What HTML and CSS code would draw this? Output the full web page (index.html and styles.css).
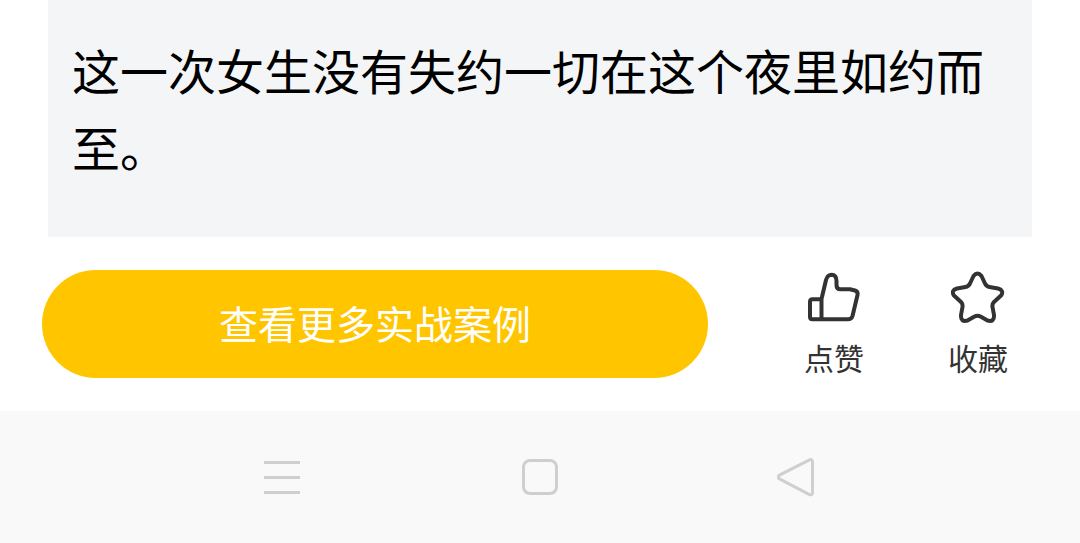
FILE: index.html
```html
<!DOCTYPE html>
<html lang="zh-CN">
<head>
  <meta charset="UTF-8" />
  <meta name="viewport" content="width=device-width, initial-scale=1.0" />
  <title>实战案例</title>
  <link rel="stylesheet" href="styles.css">
</head>
<body>
  <main class="article">
    <p>这一次女生没有失约一切在这个夜里如约而至。</p>
  </main>

  <div class="toolbar">
    <button class="more" type="button">查看更多实战案例</button>
    <div class="actions">
      <button class="action" type="button">
        <svg viewBox="0 0 54 54" aria-hidden="true">
          <path d="M14.5 29 L19 10 Q20.5 4.8 24.5 4.8 Q29.5 5 29.5 11 V15 Q29.5 19.3 33.5 19.3 H43 L48 20.5 Q51.2 21.5 50.5 25 L45.5 46 Q44.5 49.3 41 49.3 H5.5 Q3 49.3 3 46.8 V31.8 Q3 29.3 5.5 29.3 H14.5 V49.3" />
        </svg>
        <span>点赞</span>
      </button>
      <button class="action" type="button">
        <svg viewBox="0 0 54 54" aria-hidden="true">
          <path d="M22.5 6 Q26.5 0.8 30.5 6 L34 13.5 Q35.5 16.5 38.5 17 L47 18.5 Q53.5 20.5 50 25.5 L43 32 Q41 34 41.5 37 L43 45 Q43.5 52.5 36.5 50.5 L29.5 46.5 Q26.5 45 23.5 46.5 L16.5 50.5 Q9.5 52.5 10 45 L11.5 37 Q12 34 10 32 L3 25.5 Q-0.5 20.5 6 18.5 L14.5 17 Q17.5 16.5 19 13.5 Z" />
        </svg>
        <span>收藏</span>
      </button>
    </div>
  </div>

  <nav class="system-nav">
    <button type="button" aria-label="菜单">
      <svg viewBox="0 0 42 42"><path d="M3 6.5 H39 M3 21.5 H39 M3 36.5 H39" /></svg>
    </button>
    <button type="button" aria-label="主页">
      <svg viewBox="0 0 42 42"><rect x="4.5" y="4.5" width="33" height="33" rx="6.5" /></svg>
    </button>
    <button type="button" aria-label="返回">
      <svg viewBox="0 0 42 42"><path d="M32.5 3.8 L3 18.8 Q-0.5 21 3 23.2 L32.5 38.6 Q35.5 39.5 35.5 36.5 V6 Q35.5 2.8 32.5 3.8 Z" /></svg>
    </button>
  </nav>
</body>
</html>
```

FILE: styles.css
```css
* {
  margin: 0;
  padding: 0;
  box-sizing: border-box;
}

body {
  background: #fff;
  color: #000;
  font-family: "Noto Sans CJK SC", sans-serif;
}

button {
  border: none;
  background: none;
  font-family: inherit;
  cursor: pointer;
}

svg {
  display: block;
  fill: none;
  stroke-linecap: round;
  stroke-linejoin: round;
}

.article {
  margin: 0 48px;
  padding: 31px 24px 52px;
  background: #f4f5f7;
  font-size: 48px;
  line-height: 77px;
}

.toolbar {
  display: flex;
  gap: 54px;
  padding: 33px 30px 33px 42px;
}

.more {
  flex: 1;
  height: 108px;
  padding-bottom: 4px;
  border-radius: 54px;
  background: #ffc600;
  color: #fff;
  font-size: 39px;
}

.actions {
  display: flex;
}

.action {
  display: flex;
  flex-direction: column;
  align-items: center;
  justify-content: space-between;
  width: 144px;
  padding-bottom: 2px;
  color: #333;
  font-size: 30px;
  line-height: 38px;
}

.action svg {
  width: 54px;
  height: 54px;
  stroke: #333;
  stroke-width: 4;
}

.system-nav {
  display: flex;
  height: 132px;
  padding: 0 153px;
  background: #f9f9f9;
}

.system-nav button {
  flex: 1;
}

.system-nav svg {
  width: 42px;
  height: 42px;
  margin: 0 auto;
  stroke: #cfcfcf;
  stroke-width: 3;
}

.system-nav path {
  stroke-linecap: butt;
}
```
